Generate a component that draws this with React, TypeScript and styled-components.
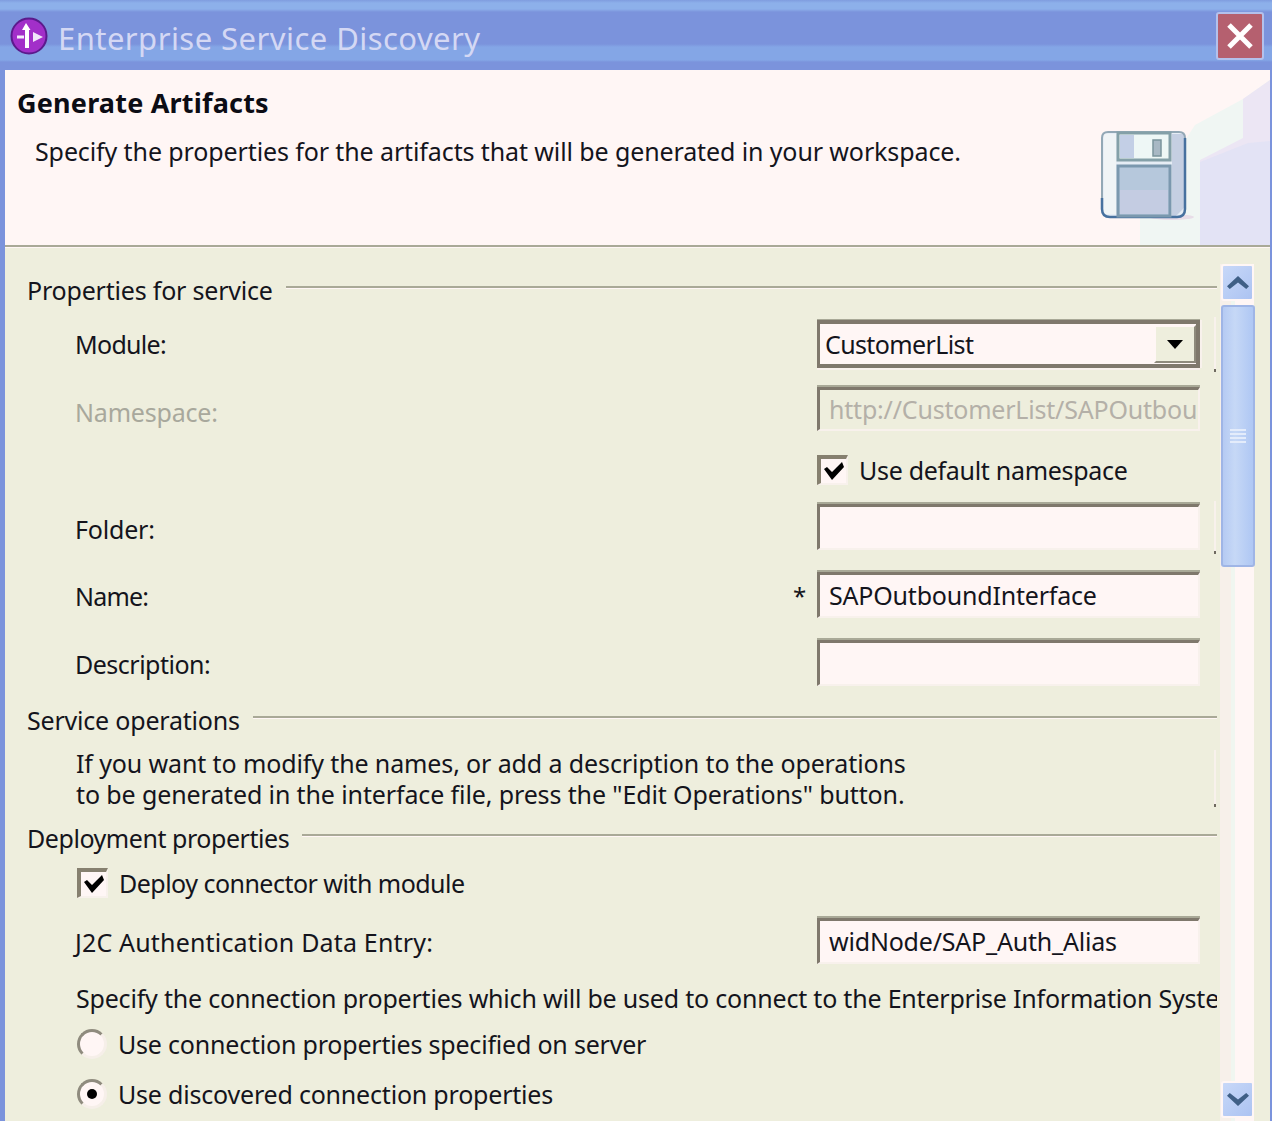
import React from "react";
import styled, { createGlobalStyle } from "styled-components";

const GlobalStyle = createGlobalStyle`
  html, body {
    margin: 0;
    padding: 0;
    height: 100%;
    overflow: hidden;
    background: #7b93dc;
  }
  body {
    font-family: "Noto Sans", "Open Sans", sans-serif;
    font-size: 25px;
    letter-spacing: -0.2px;
    color: #14141c;
  }
`;

const Window = styled.div`
  width: 1272px;
  height: 1121px;
  display: flex;
  flex-direction: column;
  overflow: hidden;
  background: #7b93dc;
`;

const TitleBar = styled.header`
  flex: 0 0 70px;
  display: flex;
  align-items: center;
  padding: 2px 8px 0 10px;
  box-sizing: border-box;
  background: linear-gradient(
    180deg,
    #7f9cdf 0, #8db0ea 3px, #8db0ea 9px, #7b93dc 12px, #7b93dc 44px,
    #84a6e6 47px, #84a6e6 60px, #7b93dc 62px
  );
`;

const TitleText = styled.span`
  margin-left: 10px;
  padding-top: 4px;
  font-size: 31px;
  line-height: 36px;
  letter-spacing: 0.45px;
  color: #d4d8f4;
  flex: 1;
`;

const CloseButton = styled.button`
  width: 48px;
  height: 48px;
  padding: 0;
  display: flex;
  align-items: center;
  justify-content: center;
  background: #b5606f;
  border: 2px solid #b3c1ec;
  border-radius: 3px;
`;

const Banner = styled.section`
  position: relative;
  flex: 0 0 175px;
  margin: 0 2px 0 5px;
  padding: 18px 0 0 12px;
  box-sizing: border-box;
  background: #fff6f5;
  overflow: hidden;
`;

const BannerArt = styled.svg`
  position: absolute;
  right: 0;
  bottom: 0;
`;

const FloppyIcon = styled.svg`
  position: absolute;
  left: 1091px;
  top: 58px;
`;

const BannerTitle = styled.h1`
  position: relative;
  margin: 0;
  font-size: 27px;
  line-height: 30px;
  letter-spacing: 0.2px;
  font-weight: 700;
  color: #0c0c14;
`;

const BannerText = styled.p`
  position: relative;
  margin: 18px 0 0 18px;
  line-height: 30px;
  letter-spacing: -0.11px;
`;

const BannerRule = styled.div`
  flex: 0 0 3px;
  margin: 0 2px 0 5px;
  box-sizing: border-box;
  background: #a9a997;
  border-bottom: 1px solid #fff6f5;
`;

const Body = styled.main`
  flex: 1;
  min-height: 0;
  margin: 0 2px 0 5px;
  display: flex;
  background: #eeeedd;
`;

const Content = styled.div`
  flex: 0 0 1212px;
  width: 1212px;
  padding: 28px 0 0 22px;
  box-sizing: border-box;
  overflow: hidden;
  white-space: nowrap;
`;

const SectionTitle = styled.div<{ $top?: number; $tracking?: number }>`
  height: 28px;
  margin-top: ${({ $top }) => $top ?? 0}px;
  display: flex;
  align-items: center;
  gap: 13px;
  line-height: 28px;
  letter-spacing: ${({ $tracking }) => $tracking ?? -0.2}px;

  &::after {
    content: "";
    flex: 1;
    height: 2px;
    margin-top: -5px;
    background: #a9a997;
    border-bottom: 1px solid #fff6f5;
  }
`;

const FieldRow = styled.div<{ $top: number; $height: number; $disabled?: boolean; $tick?: boolean }>`
  position: relative;
  height: ${({ $height }) => $height}px;
  margin-top: ${({ $top }) => $top}px;
  padding: 0 17px 0 48px;
  display: grid;
  grid-template-columns: 1fr 24px 383px;
  align-items: center;
  color: ${({ $disabled }) => ($disabled ? "#a8a89c" : "inherit")};

  &::after {
    content: "";
    display: ${({ $tick }) => ($tick ? "block" : "none")};
    position: absolute;
    right: 1px;
    top: -3px;
    bottom: -4px;
    width: 2px;
    background: linear-gradient(180deg, #f8f1ec 0, #f8f1ec calc(100% - 3px), #6f6a60 calc(100% - 3px));
  }
`;

/* $drop nudges a label down from the row's centre line */
const FieldLabel = styled.span<{ $drop?: number; $tracking?: number }>`
  padding-top: ${({ $drop }) => ($drop ?? 1) * 2}px;
  letter-spacing: ${({ $tracking }) => $tracking ?? -0.2}px;
`;

const RequiredMark = styled.span`
  font-size: 24px;
  text-align: left;
  padding-left: 0;
`;

const Field = styled.div<{ $disabled?: boolean }>`
  grid-column: 3;
  height: 100%;
  box-sizing: border-box;
  display: flex;
  align-items: center;
  padding: 0 4px 2px 9px;
  overflow: hidden;
  background: ${({ $disabled }) => ($disabled ? "#eeeedd" : "#fff6f5")};
  color: ${({ $disabled }) => ($disabled ? "#b4b0a8" : "inherit")};
  border-style: solid;
  border-width: 3px 2px 2px 3px;
  border-color: #7f786c #f8f1ec #f8f1ec #7f786c;
  box-shadow: 0 -2px 0 #a9a997;
`;

const SelectField = styled(Field)`
  justify-content: space-between;
  padding: 0 0 0 5px;
  letter-spacing: -0.62px;
  border-width: 4px 4px 4px 3px;
  border-color: #7f786c #7f786c #7f786c #7f786c;
  box-shadow: 0 -1px 0 #a9a997, 0 2px 0 #f8f1ec, 2px 0 0 #f8f1ec;
`;

const SelectButton = styled.span`
  width: 38px;
  height: 34px;
  display: flex;
  align-items: center;
  justify-content: center;
  background: #eeeedd;
  border-style: solid;
  border-width: 2px;
  border-color: #fff6f5 #8e8a7c #8e8a7c #fff6f5;
`;

const CheckRow = styled.label<{ $top: number; $column?: boolean; $tracking?: number }>`
  height: 28px;
  margin-top: ${({ $top }) => $top}px;
  display: flex;
  align-items: center;
  gap: 11px;
  letter-spacing: ${({ $tracking }) => $tracking ?? -0.2}px;
  padding-left: ${({ $column }) => ($column ? "790px" : "50px")};
`;

const CheckBox = styled.span`
  width: 31px;
  height: 30px;
  box-sizing: border-box;
  display: flex;
  align-items: center;
  justify-content: center;
  flex: none;
  background: #fff6f5;
  border-style: solid;
  border-width: 4px 2px 2px 4px;
  border-color: #86806f #f8f1ec #f8f1ec #86806f;
`;

const RadioCircle = styled.span<{ $checked?: boolean }>`
  width: 30px;
  height: 30px;
  box-sizing: border-box;
  flex: none;
  display: flex;
  align-items: center;
  justify-content: center;
  border-radius: 50%;
  background: #fff6f5;
  border: 3px solid;
  border-color: #8f8b7e #f6efe9 #f6efe9 #8f8b7e;

  &::after {
    content: "";
    width: 10px;
    height: 10px;
    border-radius: 50%;
    background: ${({ $checked }) => ($checked ? "#000" : "transparent")};
  }
`;

const Paragraph = styled.p`
  position: relative;
  margin: 14px 0 0 49px;
  line-height: 31px;
  letter-spacing: -0.12px;

  &::after {
    content: "";
    position: absolute;
    right: 1px;
    top: 2px;
    bottom: 3px;
    width: 2px;
    background: linear-gradient(180deg, #f8f1ec 0, #f8f1ec calc(100% - 3px), #6f6a60 calc(100% - 3px));
  }
`;

const PlainLine = styled.div`
  height: 27px;
  margin: 21px 0 0 49px;
  line-height: 27px;
`;

const ScrollBar = styled.aside`
  flex: 1;
  margin: 16px 0 0 0;
  display: flex;
  flex-direction: column;
  align-items: center;
  padding: 0 12px 3px 0;
  box-sizing: border-box;
  background: linear-gradient(90deg, #eeeedd 0, #eeeedd 3px, #f7f0ea 3px, #f7f0ea 14px, #f0f6f0 14px, #f0f6f0 18px, #fff6f5 18px, #fff6f5 37px, #eeeedd 37px);
`;

const ScrollButton = styled.div`
  width: 33px;
  height: 37px;
  flex: none;
  box-sizing: border-box;
  display: flex;
  align-items: center;
  justify-content: center;
  border: 2px solid #fff6f5;
  border-radius: 3px;
  background: linear-gradient(135deg, #c8d8f8, #acc3f2);
`;

const ScrollThumb = styled.div`
  width: 34px;
  height: 262px;
  margin-top: 4px;
  flex: none;
  box-sizing: border-box;
  display: flex;
  flex-direction: column;
  align-items: center;
  justify-content: center;
  gap: 2px;
  border: 2px solid #9fb5e6;
  border-radius: 3px;
  background: linear-gradient(90deg, #b5caf3, #c6d8f6 40%, #afc7f4);
`;

const ThumbGrip = styled.span`
  width: 16px;
  height: 2px;
  background: #e4ecfb;
`;

const TrackSpacer = styled.div`
  flex: 1;
`;

const ProductIcon = () => (
  <svg width="38" height="38" viewBox="0 0 38 38">
    <circle cx="19" cy="19" r="17.5" fill="#a22fc9" stroke="#5b1a8c" strokeWidth="2" />
    <path d="M16 6l4.5 7H19v18h-4V13h-3z" fill="#fff" />
    <path d="M7 18.5h7v3H7z" fill="#f4ecfb" />
    <path d="M23 15l10 5-10 5z" fill="#f1e6fa" />
  </svg>
);

const CloseIcon = () => (
  <svg width="28" height="28" viewBox="0 0 28 28">
    <path d="M3 3l22 22M25 3L3 25" stroke="#fff" strokeWidth="5" />
  </svg>
);

const Floppy = () => (
  <FloppyIcon width="100" height="96" viewBox="0 0 100 96">
    <ellipse cx="76" cy="89" rx="22" ry="3" fill="#e8dde8" />
    <rect x="6" y="4" width="83" height="85" rx="6" fill="#e6edf5" />
    <path d="M76 6h12v74l-8 8h-4z" fill="#c5cfe2" />
    <path d="M8 6h12v80H8z" fill="#f0f4f6" />
    <path d="M6 70V10q0-6 6-6h71q6 0 6 6" fill="none" stroke="#93a8b6" strokeWidth="2" />
    <path d="M6 70v11q0 8 8 8h67q8 0 8-8V10" fill="none" stroke="#47719f" strokeWidth="2.5" />
    <rect x="22" y="5" width="52" height="27" fill="#eef7f6" stroke="#84a0a8" strokeWidth="3" />
    <rect x="24" y="7" width="14" height="23" fill="#c3cfe6" />
    <rect x="57" y="12" width="8" height="16" fill="#a8b8c4" stroke="#7a949c" strokeWidth="1.5" />
    <rect x="22" y="38" width="52" height="50" fill="#b6c8dc" stroke="#7b98ae" strokeWidth="3" />
    <rect x="24" y="62" width="48" height="24" fill="#c4cce2" />
  </FloppyIcon>
);

const Backdrop = () => (
  <BannerArt width="130" height="165" viewBox="0 0 130 165">
    <path d="M0 165V130L55 45l48-26 27-19v165z" fill="#f0f6f3" />
    <path d="M103 19l27-19v165H60V80l43-22z" fill="#ece6f4" />
    <path d="M60 82l48-19 22-2v104H60z" fill="#e3e3f5" />
  </BannerArt>
);

const Check = () => (
  <svg width="22" height="20" viewBox="0 0 22 20">
    <path d="M1 8l3-2 5 5L19 1l2 5L9 19z" fill="#000" />
  </svg>
);

const Chevron = ({ down }: { down?: boolean }) => (
  <svg width="22" height="13" viewBox="0 0 24 14">
    <path
      d={down ? "M0 3l3-3 9 7 9-7 3 3-12 11z" : "M0 11l3 3 9-7 9 7 3-3L12 0z"}
      fill="#3f5f86"
    />
  </svg>
);

const App = (): JSX.Element => {
  return (
    <>
      <GlobalStyle />
      <Window>
        <TitleBar>
          <ProductIcon />
          <TitleText>Enterprise Service Discovery</TitleText>
          <CloseButton aria-label="Close">
            <CloseIcon />
          </CloseButton>
        </TitleBar>

        <Banner>
          <Backdrop />
          <Floppy />
          <BannerTitle>Generate Artifacts</BannerTitle>
          <BannerText>Specify the properties for the artifacts that will be generated in your workspace.</BannerText>
        </Banner>
        <BannerRule />

        <Body>
          <Content>
            <SectionTitle>Properties for service</SectionTitle>

            <FieldRow $top={16} $height={48} $tick>
              <FieldLabel $drop={0} $tracking={-0.7}>Module:</FieldLabel>
              <SelectField>
                CustomerList
                <SelectButton>
                  <svg width="16" height="9" viewBox="0 0 16 9">
                    <path d="M0 0h16L8 9z" fill="#000" />
                  </svg>
                </SelectButton>
              </SelectField>
            </FieldRow>

            <FieldRow $top={19} $height={44} $disabled>
              <FieldLabel $drop={3}>Namespace:</FieldLabel>
              <Field $disabled>http://CustomerList/SAPOutbou</Field>
            </FieldRow>

            <CheckRow $top={25} $column $tracking={-0.3}>
              <CheckBox><Check /></CheckBox>
              Use default namespace
            </CheckRow>

            <FieldRow $top={20} $height={46} $tick>
              <FieldLabel $drop={2}>Folder:</FieldLabel>
              <Field />
            </FieldRow>

            <FieldRow $top={22} $height={46}>
              <FieldLabel $tracking={-0.8}>Name:</FieldLabel>
              <RequiredMark>*</RequiredMark>
              <Field>SAPOutboundInterface</Field>
            </FieldRow>

            <FieldRow $top={22} $height={46}>
              <FieldLabel $tracking={-0.5}>Description:</FieldLabel>
              <Field />
            </FieldRow>

            <SectionTitle $top={20}>Service operations</SectionTitle>
            <Paragraph>
              If you want to modify the names, or add a description to the operations
              <br />
              to be generated in the interface file, press the "Edit Operations" button.
            </Paragraph>

            <SectionTitle $top={14} $tracking={-0.45}>Deployment properties</SectionTitle>
            <CheckRow $top={17} $tracking={-0.52}>
              <CheckBox><Check /></CheckBox>
              Deploy connector with module
            </CheckRow>

            <FieldRow $top={21} $height={46}>
              <FieldLabel $tracking={0.17}>J2C Authentication Data Entry:</FieldLabel>
              <Field>widNode/SAP_Auth_Alias</Field>
            </FieldRow>

            <PlainLine>Specify the connection properties which will be used to connect to the Enterprise Information System</PlainLine>

            <CheckRow $top={18}>
              <RadioCircle />
              Use connection properties specified on server
            </CheckRow>
            <CheckRow $top={22}>
              <RadioCircle $checked />
              Use discovered connection properties
            </CheckRow>
          </Content>

          <ScrollBar>
            <ScrollButton><Chevron /></ScrollButton>
            <ScrollThumb>
              <ThumbGrip />
              <ThumbGrip />
              <ThumbGrip />
              <ThumbGrip />
            </ScrollThumb>
            <TrackSpacer />
            <ScrollButton><Chevron down /></ScrollButton>
          </ScrollBar>
        </Body>
      </Window>
    </>
  );
};

export default App;
